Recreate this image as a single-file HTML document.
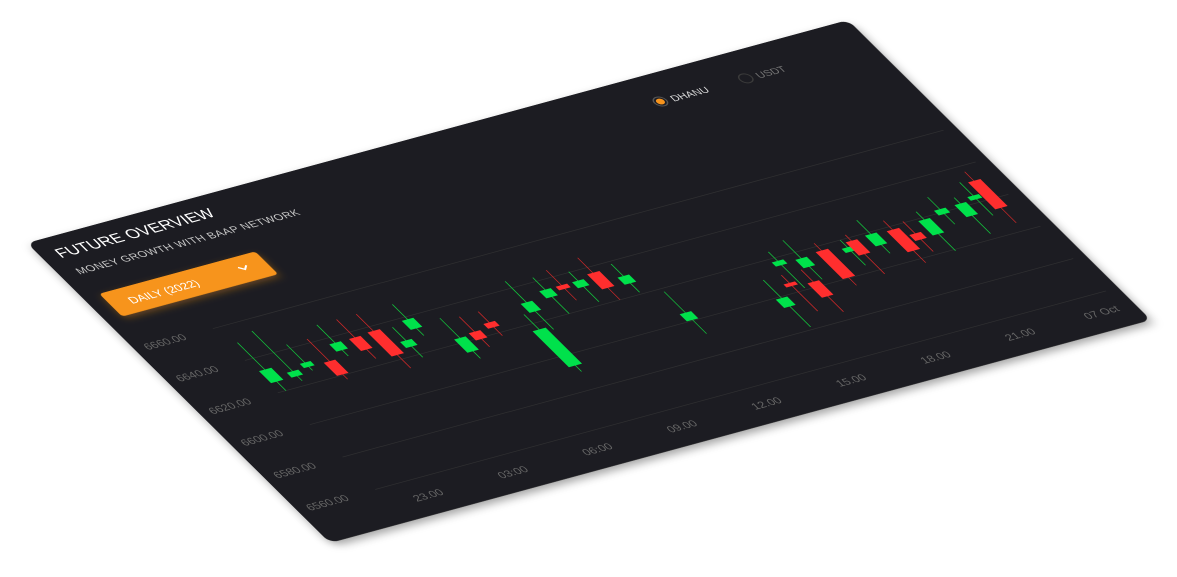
<!DOCTYPE html>
<html><head><meta charset="utf-8"><style>
html,body{margin:0;padding:0;background:#fff;width:1177px;height:577px;overflow:hidden}
svg{display:block}
text{font-family:"Liberation Sans",sans-serif}
</style></head><body>
<svg width="1177" height="577" viewBox="0 0 1177 577">
<defs>
<filter id="sh" x="-10%" y="-10%" width="120%" height="130%"><feDropShadow dx="0" dy="6" stdDeviation="6" flood-color="#000" flood-opacity="0.35"/></filter>
<filter id="bs" x="-20%" y="-40%" width="140%" height="200%"><feDropShadow dx="0" dy="4" stdDeviation="5" flood-color="#f7941d" flood-opacity="0.35"/></filter>
</defs>
<g transform="matrix(0.821 -0.223 0.606 0.6 27 243)">
<rect x="0" y="0" width="1000" height="500" rx="10" fill="#1f1f20" filter="url(#sh)"/>
<text x="18" y="32" font-size="19.5" fill="#fff">FUTURE OVERVIEW</text>
<text x="20" y="60" font-size="13" fill="#c8c8c8" letter-spacing="0.5">MONEY GROWTH WITH BAAP NETWORK</text>
<rect x="20" y="92" width="190" height="38" rx="4" fill="#f7941d" filter="url(#bs)"/>
<text x="42" y="117" font-size="14" fill="#fff">DAILY (2022)</text>
<path d="M178 107 l5 5 l5 -5" stroke="#fff" stroke-width="2" fill="none"/>
<circle cx="742" cy="40" r="7" fill="none" stroke="#555" stroke-width="1.5"/>
<circle cx="742" cy="40" r="4.5" fill="#f7941d"/>
<text x="755" y="45" font-size="12.5" fill="#ddd">DHANU</text>
<circle cx="846" cy="40" r="7" fill="none" stroke="#3a3a3a" stroke-width="1.5"/>
<text x="859" y="45" font-size="12.5" fill="#777">USDT</text>
<g stroke="#2f2f31" stroke-width="1">
<line x1="95" y1="178" x2="985" y2="178"/><line x1="95" y1="231" x2="985" y2="231"/>
<line x1="95" y1="285" x2="985" y2="285"/><line x1="95" y1="338" x2="985" y2="338"/>
<line x1="95" y1="392" x2="985" y2="392"/><line x1="95" y1="446" x2="985" y2="446"/>
</g>
<g font-size="13.5" fill="#666">
<text x="12" y="183">6660.00</text><text x="12" y="236">6640.00</text>
<text x="12" y="290">6620.00</text><text x="12" y="343">6600.00</text>
<text x="12" y="397">6580.00</text><text x="12" y="451">6560.00</text>
<g text-anchor="middle">
<text x="140" y="477">23.00</text><text x="243" y="477">03:00</text>
<text x="346" y="477">06:00</text><text x="449" y="477">09.00</text>
<text x="552" y="477">12.00</text><text x="655" y="477">15.00</text>
<text x="758" y="477">18.00</text><text x="861" y="477">21.00</text>
<text x="960" y="477">07 Oct</text></g>
</g>
<g stroke-width="1">
<g stroke="#12c83c">
<line x1="105" y1="205" x2="105" y2="285"/><line x1="130" y1="195" x2="130" y2="278"/>
<line x1="150" y1="225" x2="150" y2="268"/><line x1="198" y1="210" x2="198" y2="262"/>
<line x1="268" y1="240" x2="268" y2="290"/><line x1="290" y1="210" x2="290" y2="262"/>
<line x1="322" y1="245" x2="322" y2="312"/><line x1="406" y1="270" x2="406" y2="365"/>
<line x1="420" y1="220" x2="420" y2="300"/><line x1="450" y1="225" x2="450" y2="285"/>
<line x1="490" y1="230" x2="490" y2="280"/><line x1="538" y1="235" x2="538" y2="282"/>
<line x1="562" y1="290" x2="562" y2="360"/><line x1="668" y1="310" x2="668" y2="388"/>
<line x1="700" y1="275" x2="700" y2="335"/><line x1="725" y1="265" x2="725" y2="330"/>
<line x1="780" y1="285" x2="780" y2="327"/><line x1="815" y1="265" x2="815" y2="320"/>
<line x1="880" y1="275" x2="880" y2="340"/><line x1="905" y1="260" x2="905" y2="305"/>
<line x1="930" y1="270" x2="930" y2="330"/><line x1="950" y1="252" x2="950" y2="307"/>
</g>
<g stroke="#d22828">
<line x1="175" y1="225" x2="175" y2="292"/><line x1="222" y1="210" x2="222" y2="275"/>
<line x1="246" y1="210" x2="246" y2="300"/><line x1="342" y1="250" x2="342" y2="300"/>
<line x1="365" y1="250" x2="365" y2="290"/><line x1="470" y1="220" x2="470" y2="270"/>
<line x1="512" y1="215" x2="512" y2="285"/><line x1="690" y1="310" x2="690" y2="370"/>
<line x1="714" y1="310" x2="714" y2="380"/><line x1="752" y1="280" x2="752" y2="350"/>
<line x1="790" y1="280" x2="790" y2="345"/><line x1="840" y1="275" x2="840" y2="345"/>
<line x1="858" y1="283" x2="858" y2="333"/><line x1="965" y1="240" x2="965" y2="325"/>
</g>
</g>
<g fill="#00e14b">
<rect x="98" y="250" width="15" height="20"/><rect x="123" y="262" width="14" height="8"/>
<rect x="144" y="255" width="13" height="7"/><rect x="191" y="240" width="14" height="12"/>
<rect x="261" y="262" width="14" height="10"/><rect x="283" y="235" width="14" height="15"/>
<rect x="315" y="278" width="14" height="22"/><rect x="398" y="295" width="16" height="60"/>
<rect x="413" y="255" width="14" height="15"/><rect x="443" y="245" width="14" height="12"/>
<rect x="483" y="245" width="14" height="10"/><rect x="531" y="255" width="14" height="12"/>
<rect x="555" y="325" width="14" height="12"/><rect x="661" y="340" width="14" height="14"/>
<rect x="693" y="290" width="14" height="7"/><rect x="718" y="295" width="14" height="14"/>
<rect x="773" y="297" width="14" height="7"/><rect x="808" y="288" width="14" height="18"/>
<rect x="873" y="288" width="14" height="24"/><rect x="898" y="280" width="14" height="8"/>
<rect x="923" y="280" width="14" height="20"/><rect x="943" y="274" width="14" height="6"/>
</g>
<g fill="#ff2e2e">
<rect x="168" y="262" width="14" height="22"/><rect x="215" y="240" width="14" height="20"/>
<rect x="239" y="238" width="15" height="40"/><rect x="335" y="275" width="14" height="12"/>
<rect x="358" y="268" width="14" height="8"/><rect x="463" y="245" width="14" height="6"/>
<rect x="505" y="240" width="15" height="25"/><rect x="683" y="323" width="14" height="5"/>
<rect x="707" y="330" width="14" height="24"/><rect x="745" y="292" width="15" height="45"/>
<rect x="783" y="290" width="14" height="22"/><rect x="833" y="290" width="15" height="35"/>
<rect x="851" y="303" width="14" height="10"/><rect x="958" y="255" width="15" height="45"/>
</g>
</g>
</svg>
</body></html>
